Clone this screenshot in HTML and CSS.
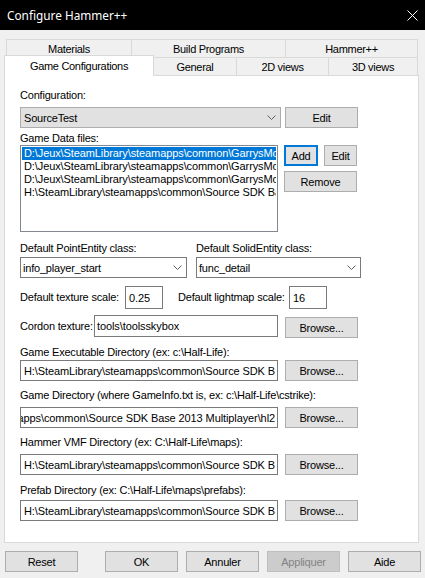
FILE: index.html
```html
<!DOCTYPE html>
<html>
<head>
<meta charset="utf-8">
<title>Configure Hammer++</title>
<link rel="stylesheet" href="styles.css">
</head>
<body>

<!-- window caption -->
<div class="titlebar">
    <span class="title">Configure Hammer++</span>
    <svg class="close" width="11" height="11" viewBox="0 0 11 11">
        <path d="M0.5 0.5L10.5 10.5M10.5 0.5L0.5 10.5" stroke="#fff" stroke-width="1"/>
    </svg>
</div>

<!-- two rows of tabs, the front row holds the open page -->
<div class="tabs">
    <div class="tabrow back">
        <div class="tab t-mat">Materials</div>
        <div class="tab t-build">Build Programs</div>
        <div class="tab t-hpp">Hammer++</div>
    </div>
    <div class="tabrow front">
        <div class="tab active t-game">Game Configurations</div>
        <div class="tab t-gen">General</div>
        <div class="tab t-2d">2D views</div>
        <div class="tab t-3d">3D views</div>
    </div>
</div>

<div class="panel">
    <div class="lbl">Configuration:</div>
    <div class="row r-config">
        <div class="combo gray w-config">
            <span>SourceTest</span>
            <svg class="chev" width="9" height="5" viewBox="0 0 9 5"><polyline points="0.5,0.5 4.5,4.5 8.5,0.5" fill="none" stroke="#606060"/></svg>
        </div>
        <div class="btn w-btn ml-4">Edit</div>
    </div>

    <div class="lbl mt-4">Game Data files:</div>
    <div class="row">
        <div class="listbox">
            <div class="item sel">D:\Jeux\SteamLibrary\steamapps\common\GarrysMod</div>
            <div class="item">D:\Jeux\SteamLibrary\steamapps\common\GarrysMod</div>
            <div class="item">D:\Jeux\SteamLibrary\steamapps\common\GarrysMod</div>
            <div class="item">H:\SteamLibrary\steamapps\common\Source SDK Ba</div>
        </div>
        <div class="listbtns">
            <div class="btnpair">
                <div class="btn focus w-add">Add</div>
                <div class="btn w-edit">Edit</div>
            </div>
            <div class="btn w-btn mt-5">Remove</div>
        </div>
    </div>

    <div class="row mt-10">
        <div class="lbl w-point">Default PointEntity class:</div>
        <div class="lbl">Default SolidEntity class:</div>
    </div>
    <div class="row mt-2">
        <div class="combo w-point-box">
            <span>info_player_start</span>
            <svg class="chev" width="9" height="5" viewBox="0 0 9 5"><polyline points="0.5,0.5 4.5,4.5 8.5,0.5" fill="none" stroke="#606060"/></svg>
        </div>
        <div class="combo w-solid-box ml-9">
            <span>func_detail</span>
            <svg class="chev" width="9" height="5" viewBox="0 0 9 5"><polyline points="0.5,0.5 4.5,4.5 8.5,0.5" fill="none" stroke="#606060"/></svg>
        </div>
    </div>

    <div class="row r-scale">
        <div class="lbl w-tex">Default texture scale:</div>
        <div class="edit w-scale">0.25</div>
        <div class="lbl w-light">Default lightmap scale:</div>
        <div class="edit w-scale">16</div>
    </div>

    <div class="row r-cordon">
        <div class="lbl w-cordon">Cordon texture:</div>
        <div class="edit w-cordon-box">tools\toolsskybox</div>
        <div class="btn w-btn browse">Browse...</div>
    </div>

    <div class="lbl mt-8">Game Executable Directory (ex: c:\Half-Life):</div>
    <div class="row mt-1">
        <div class="edit w-path">H:\SteamLibrary\steamapps\common\Source SDK B</div>
        <div class="btn w-btn ml-7">Browse...</div>
    </div>

    <div class="lbl mt-8">Game Directory (where GameInfo.txt is, ex: c:\Half-Life\cstrike):</div>
    <div class="row mt-5">
        <div class="edit w-path scrolled"><span>apps\common\Source SDK Base 2013 Multiplayer\hl2</span></div>
        <div class="btn w-btn ml-7">Browse...</div>
    </div>

    <div class="lbl mt-8">Hammer VMF Directory (ex: C:\Half-Life\maps):</div>
    <div class="row mt-5">
        <div class="edit w-path">H:\SteamLibrary\steamapps\common\Source SDK B</div>
        <div class="btn w-btn ml-7">Browse...</div>
    </div>

    <div class="lbl mt-9">Prefab Directory (ex: C:\Half-Life\maps\prefabs):</div>
    <div class="row mt-3">
        <div class="edit w-path">H:\SteamLibrary\steamapps\common\Source SDK B</div>
        <div class="btn w-btn ml-7">Browse...</div>
    </div>
</div>

<!-- dialog buttons -->
<div class="footer">
    <div class="btn w-btn">Reset</div>
    <div class="btn w-btn ok">OK</div>
    <div class="btn w-btn">Annuler</div>
    <div class="btn w-btn disabled">Appliquer</div>
    <div class="btn w-btn">Aide</div>
</div>

</body>
</html>
```

FILE: styles.css
```css
* {
    box-sizing: border-box;
}

body {
    margin: 0;
    width: 425px;
    height: 578px;
    overflow: hidden;
    background-color: #f0f0f0;
    color: #000;
    font-family: "Liberation Sans", Arial, sans-serif;
    font-size: 11px;
    letter-spacing: -0.2px;
}

/* caption bar */
.titlebar {
    height: 30px;
    background-color: #000;
    color: #fff;
    display: flex;
    align-items: center;
    justify-content: space-between;
    padding: 0 7px 0 7px;
}

.title {
    font-family: "Noto Sans", sans-serif;
    font-size: 11.8px;
    letter-spacing: 0;
}

/* tabs */
.tabs {
    padding-top: 9px;
}

.tabrow {
    display: flex;
}

.tabrow.back {
    margin-left: 6px;
    height: 18px;
}

.tabrow.front {
    margin-left: 4px;
    margin-top: -2px;
    align-items: flex-start;
}

.tab {
    height: 18px;
    border: 1px solid #d9d9d9;
    border-bottom: none;
    display: flex;
    align-items: center;
    justify-content: center;
    margin-left: -1px;
    letter-spacing: -0.3px;
    padding-top: 1px;
}

.front .tab {
    margin-top: 2px;
}

.tab.active {
    position: relative;
    z-index: 1;
    margin-top: 0;
    margin-left: 0;
    height: 21px;
    padding-top: 0;
    padding-bottom: 1px;
    background-color: #fff;
}

.t-mat { width: 126px; margin-left: 0; }
.t-build { width: 155px; }
.t-hpp { width: 133px; }
.t-game { width: 150px; }
.t-gen { width: 84px; }
.t-2d { width: 93px; }
.t-3d { width: 90px; }

/* page body */
.panel {
    margin: -1px 0 0 4px;
    width: 415px;
    height: 468px;
    border: 1px solid #d9d9d9;
    background-color: #fff;
    padding: 13px 0 0 15px;
}

.lbl {
    line-height: 13px;
    height: 13px;
    white-space: nowrap;
}

.row {
    display: flex;
    align-items: flex-start;
}

.r-config { margin-top: 5px; }

.r-scale {
    margin-top: 8px;
    align-items: center;
}

.r-cordon { margin-top: 6px; }

.mt-1 { margin-top: 1px; }
.mt-2 { margin-top: 2px; }
.mt-3 { margin-top: 3px; }
.mt-4 { margin-top: 4px; }
.mt-5 { margin-top: 5px; }
.mt-8 { margin-top: 8px; }
.mt-9 { margin-top: 9px; }
.mt-10 { margin-top: 10px; }
.ml-4 { margin-left: 4px; }
.ml-7 { margin-left: 7px; }
.ml-9 { margin-left: 9px; }

/* controls */
.btn {
    height: 21px;
    border: 1px solid #adadad;
    background-color: #e1e1e1;
    display: flex;
    align-items: center;
    justify-content: center;
    white-space: nowrap;
}

.btn.focus {
    border: 2px solid #0078d7;
}

.btn.disabled {
    background-color: #cccccc;
    border-color: #bfbfbf;
    color: #838383;
}

.w-btn { width: 73px; }
.w-add { width: 34px; }
.w-edit { width: 33px; }

.combo {
    height: 21px;
    border: 1px solid #7a7a7a;
    background-color: #fff;
    display: flex;
    align-items: center;
    justify-content: space-between;
    padding: 0 4px 0 2px;
    white-space: nowrap;
}

.combo.gray {
    border-color: #adadad;
    background-color: #e1e1e1;
    padding-left: 3px;
    padding-right: 4px;
}

.chev {
    display: block;
}

.w-config { width: 261px; }
.w-point { width: 176px; }
.w-point-box { width: 167px; }
.w-solid-box { width: 165px; }

.edit {
    height: 21px;
    border: 1px solid #7a7a7a;
    background-color: #fff;
    display: flex;
    align-items: center;
    padding: 0 2px 0 3px;
    overflow: hidden;
    white-space: nowrap;
    letter-spacing: -0.1px;
}

/* the caret sits at the end, so the start of the path is cut */
.edit.scrolled {
    justify-content: flex-end;
}

.w-path { width: 258px; }

.w-tex { width: 105px; line-height: 23px; height: 23px; }
.w-light { width: 111px; margin-left: 15px; line-height: 23px; height: 23px; }
.w-scale { width: 38px; height: 23px; }

.w-cordon { width: 74px; line-height: 22px; height: 22px; }
.w-cordon-box { width: 184px; height: 22px; padding-left: 2px; }
.browse { margin: 2px 0 0 7px; }

.listbox {
    width: 258px;
    height: 87px;
    border: 1px solid #828790;
    padding: 1px;
    overflow: hidden;
}

.item {
    height: 13px;
    line-height: 13px;
    padding-left: 2px;
    white-space: nowrap;
    overflow: hidden;
    letter-spacing: -0.1px;
}

.item.sel {
    background-color: #0078d7;
    color: #fff;
}

.listbtns {
    margin-left: 6px;
}

.btnpair {
    display: flex;
    gap: 6px;
}

/* bottom buttons */
.footer {
    display: flex;
    gap: 8px;
    margin-top: 8px;
    padding-left: 5px;
}

.footer .ok {
    margin-left: 19px;
}
```
